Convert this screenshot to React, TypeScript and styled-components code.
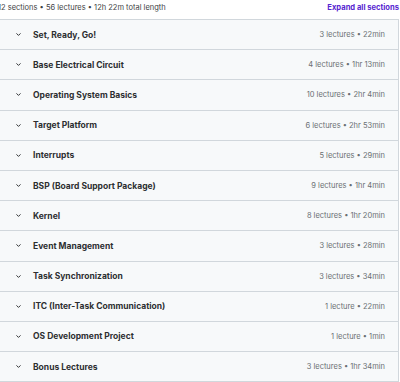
import styled, { createGlobalStyle } from "styled-components";

const GlobalStyle = createGlobalStyle`
  html, body {
    margin: 0;
    padding: 0;
    background: #ffffff;
    overflow: hidden;
  }
  * {
    box-sizing: border-box;
  }
`;

const sections = [
  { title: "Set, Ready, Go!", meta: "3 lectures • 22min" },
  { title: "Base Electrical Circuit", meta: "4 lectures • 1hr 13min" },
  { title: "Operating System Basics", meta: "10 lectures • 2hr 4min" },
  { title: "Target Platform", meta: "6 lectures • 2hr 53min" },
  { title: "Interrupts", meta: "5 lectures • 29min" },
  { title: "BSP (Board Support Package)", meta: "9 lectures • 1hr 4min" },
  { title: "Kernel", meta: "8 lectures • 1hr 20min" },
  { title: "Event Management", meta: "3 lectures • 28min" },
  { title: "Task Synchronization", meta: "3 lectures • 34min" },
  { title: "ITC (Inter-Task Communication)", meta: "1 lecture • 22min" },
  { title: "OS Development Project", meta: "1 lecture • 1min" },
  { title: "Bonus Lectures", meta: "3 lectures • 1hr 34min" },
];

const MainDiv = styled.div`
  width: 401px;
  margin-left: -2px;

  font-family: "Inter", "Liberation Sans", sans-serif;
  color: #2d2f31;

  display: flex;
  flex-direction: column;
`;

const HeaderRow = styled.div`
  height: 19px;
  padding-bottom: 4px;

  display: flex;
  justify-content: space-between;
  align-items: center;
`;

const Summary = styled.span`
  font-size: 7.5px;
  color: #3e4143;
`;

const ExpandLink = styled.span`
  font-size: 7.6px;
  font-weight: 700;
  color: #5624d0;
`;

const SectionList = styled.div`
  border: 1px solid #d1d7dc;
  border-bottom: none;

  display: flex;
  flex-direction: column;
`;

const SectionRow = styled.div`
  height: 30.2px;
  padding: 0 13px 0 16px;

  background-color: #f7f9fa;
  border-bottom: 1px solid #d1d7dc;

  display: flex;
  align-items: center;
`;

const Chevron = styled.svg`
  width: 7px;
  height: 7px;
  margin-right: 11px;
  flex-shrink: 0;
`;

const Title = styled.span`
  flex: 1;

  font-size: 8.5px;
  font-weight: 700;
  color: #2d2f31;
`;

const Meta = styled.span`
  font-size: 7.5px;
  color: #6a6f73;
`;

const App = () => {
  return (
    <>
      <GlobalStyle />
      <MainDiv>
        <HeaderRow>
          <Summary>12 sections • 56 lectures • 12h 22m total length</Summary>
          <ExpandLink>Expand all sections</ExpandLink>
        </HeaderRow>
        <SectionList>
          {sections.map((section) => (
            <SectionRow key={section.title}>
              <Chevron viewBox="0 0 10 10">
                <path
                  d="M2.5 3.8 L5 6.3 L7.5 3.8"
                  fill="none"
                  stroke="#2d2f31"
                  strokeWidth="1.4"
                  strokeLinecap="round"
                  strokeLinejoin="round"
                />
              </Chevron>
              <Title>{section.title}</Title>
              <Meta>{section.meta}</Meta>
            </SectionRow>
          ))}
        </SectionList>
      </MainDiv>
    </>
  );
};

export default App;
